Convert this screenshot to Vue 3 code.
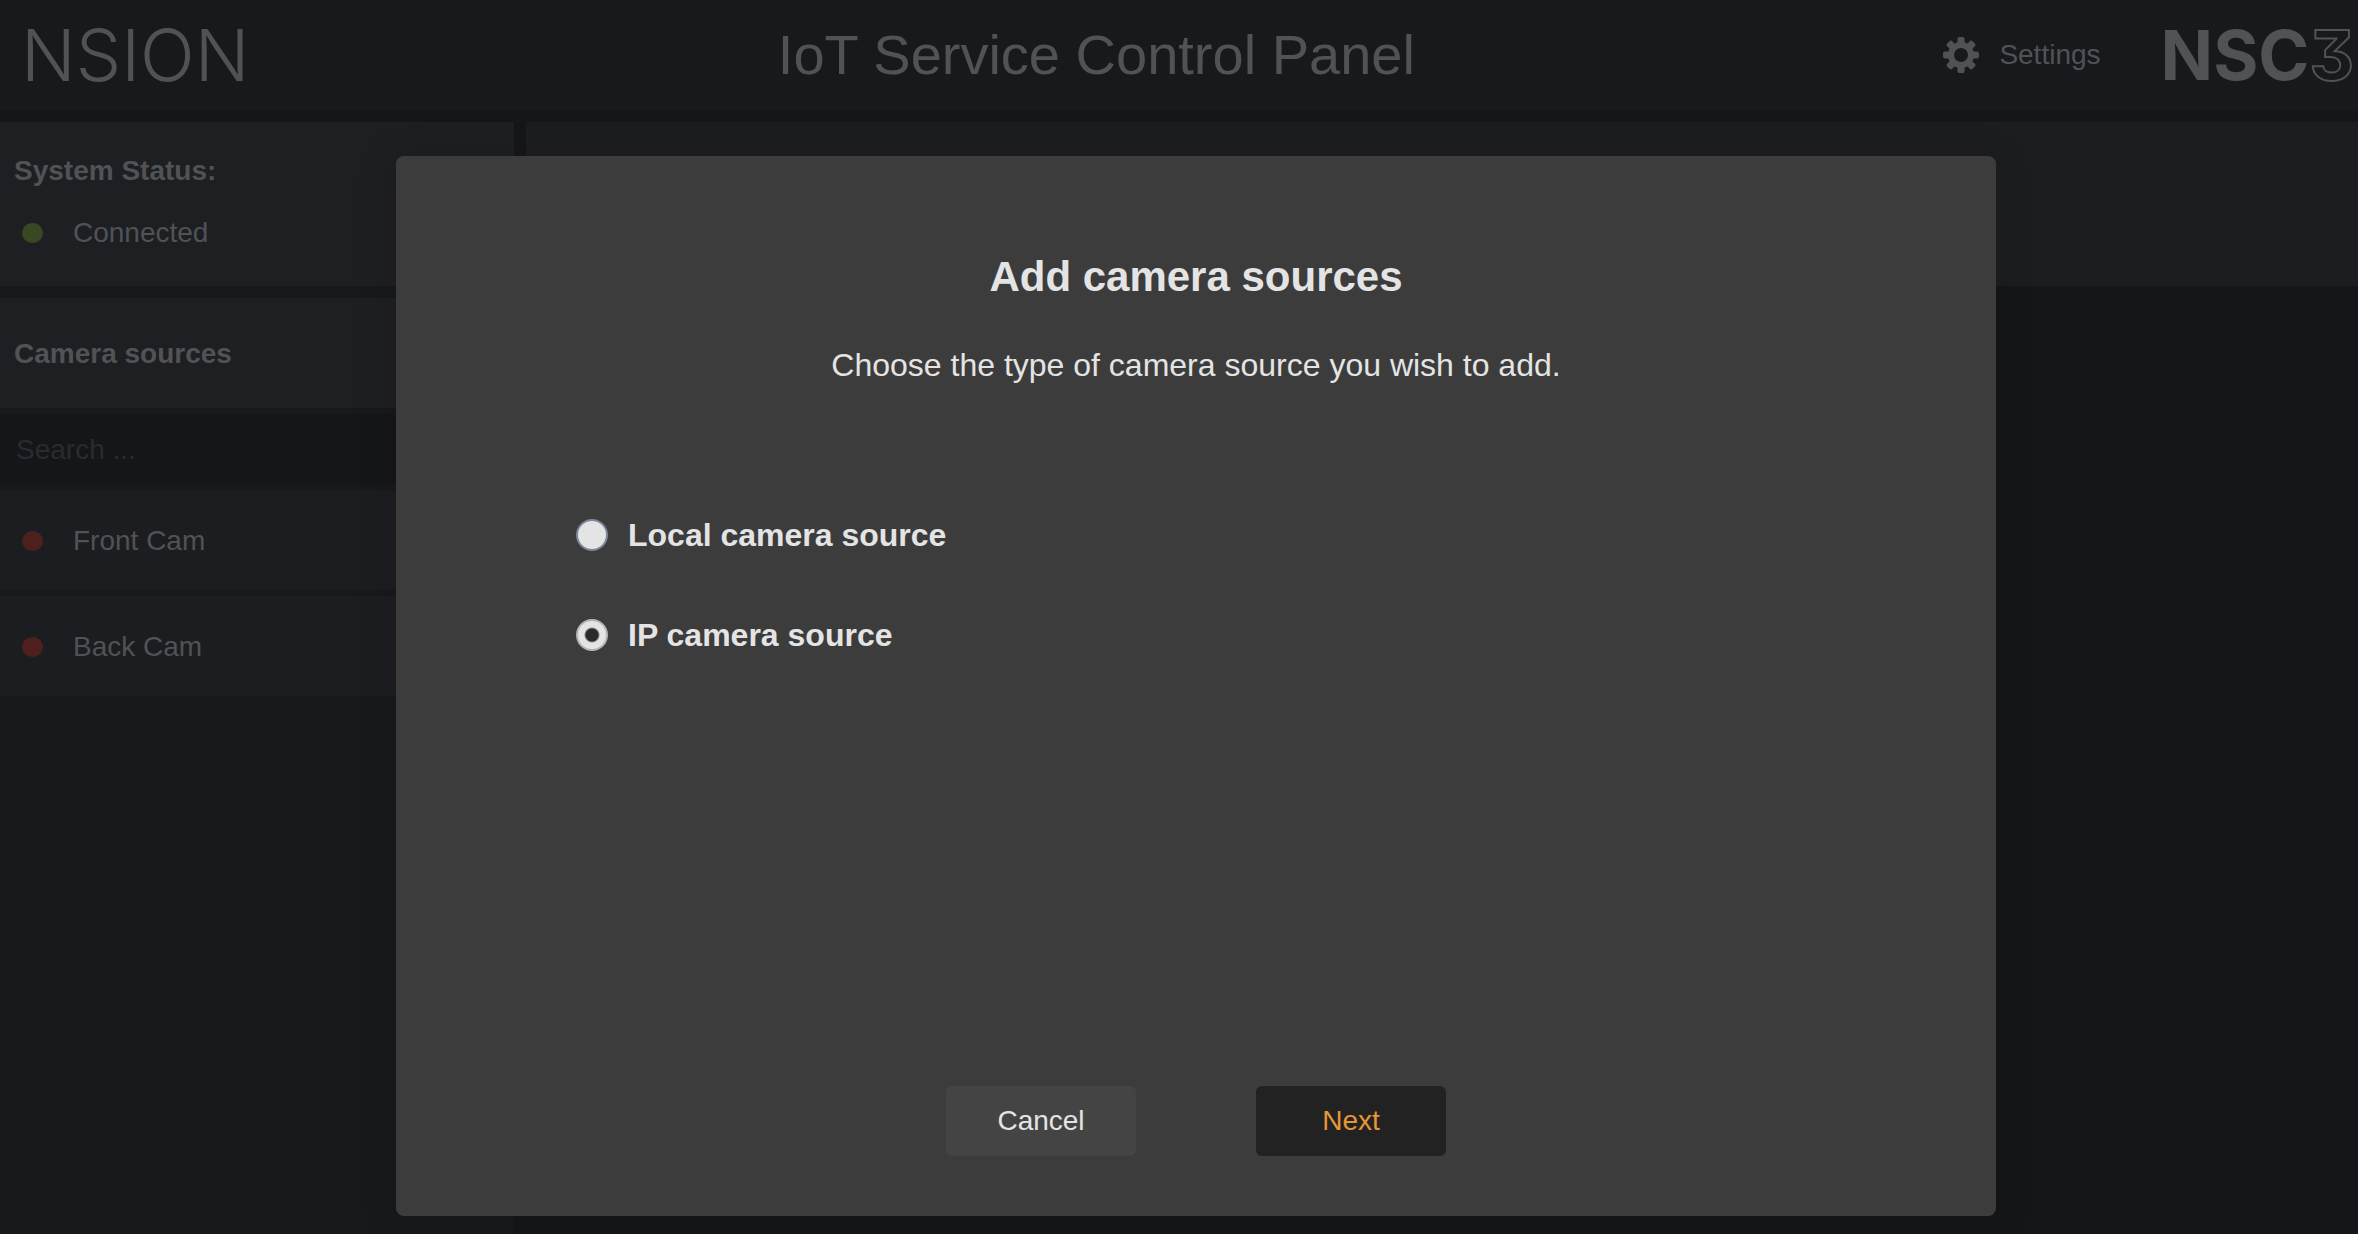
<script setup>
import { ref } from 'vue'

const cameras = ['Front Cam', 'Back Cam']
const sourceTypes = [
  { id: 'local', label: 'Local camera source' },
  { id: 'ip', label: 'IP camera source' },
]
const selected = ref('ip')
const search = ref('')
const teeth = [0, 45, 90, 135, 180, 225, 270, 315]
</script>

<template>
  <div class="app">
    <header class="topbar">
      <div class="brand">NSION</div>
      <h1 class="page-title">IoT Service Control Panel</h1>
      <div class="topbar-right">
        <a class="settings" href="#settings">
          <svg class="gear" viewBox="0 0 36 36" aria-hidden="true">
            <circle cx="18" cy="18" r="10" fill="none" stroke="currentColor" stroke-width="6" />
            <rect
              v-for="angle in teeth"
              :key="angle"
              x="14.4"
              y="0"
              width="7.2"
              height="9"
              rx="2"
              fill="currentColor"
              :transform="`rotate(${angle} 18 18)`"
            />
          </svg>
          <span>Settings</span>
        </a>
        <div class="product">NSC<span class="product-number">3</span></div>
      </div>
    </header>

    <div class="body">
      <aside class="sidebar">
        <section class="status">
          <h2>System Status:</h2>
          <p class="status-line"><span class="dot online"></span>Connected</p>
        </section>
        <section class="sources">
          <h2 class="sources-title">Camera sources</h2>
          <input v-model="search" class="search" type="text" placeholder="Search ..." aria-label="Search cameras" />
          <ul class="camera-list">
            <li v-for="camera in cameras" :key="camera"><span class="dot offline"></span>{{ camera }}</li>
          </ul>
        </section>
      </aside>
      <main class="content"><div class="content-bar"></div></main>
    </div>

    <div class="overlay">
      <form class="dialog" role="dialog" aria-labelledby="dialog-title" @submit.prevent>
        <h2 id="dialog-title" class="dialog-title">Add camera sources</h2>
        <p class="dialog-text">Choose the type of camera source you wish to add.</p>
        <div class="options">
          <label v-for="type in sourceTypes" :key="type.id" class="option" :for="type.id">
            <input :id="type.id" v-model="selected" type="radio" name="source-type" :value="type.id" />
            {{ type.label }}
          </label>
        </div>
        <div class="actions">
          <button type="button" class="cancel">Cancel</button>
          <button type="submit" class="next">Next</button>
        </div>
      </form>
    </div>
  </div>
</template>

<style>
body {
  margin: 0;
  background: #15161a;
}
</style>

<style scoped>
* {
  box-sizing: border-box;
}
h1,
h2,
p,
ul {
  margin: 0;
  padding: 0;
}
.app {
  position: relative;
  display: flex;
  flex-direction: column;
  min-height: 100vh;
  background: #15161a;
  color: #515256;
  font-family: "Liberation Sans", Arial, sans-serif;
  font-size: 28px;
  line-height: 40px;
}
.topbar {
  display: flex;
  align-items: center;
  justify-content: space-between;
  height: 110px;
  padding: 0 4px 0 21px;
  background: #18191d;
}
.brand {
  font-family: Inter, sans-serif;
  font-weight: 300;
  font-size: 72px;
  line-height: 110px;
}
.page-title {
  font-size: 56px;
  font-weight: 400;
  line-height: 110px;
}
.topbar-right {
  display: flex;
  align-items: center;
  gap: 60px;
}
.settings {
  display: flex;
  align-items: center;
  gap: 20px;
  color: inherit;
  text-decoration: none;
}
.gear {
  width: 36px;
  height: 36px;
}
.product {
  font-family: Inter, sans-serif;
  font-weight: 700;
  font-size: 69px;
  line-height: 110px;
}
.product-number {
  color: transparent;
  font-feature-settings: "cv09";
  -webkit-text-stroke: 2px #515256;
}
.body {
  display: flex;
  flex: 1;
  gap: 12px;
  padding-top: 12px;
}
.sidebar {
  display: flex;
  flex-direction: column;
  gap: 12px;
  width: 514px;
  background: #18191d;
}
.sidebar h2 {
  font-size: 28px;
}
.status {
  display: flex;
  flex-direction: column;
  gap: 22px;
  padding: 29px 14px 33px;
  background: #1e1f23;
}
.status-line,
.camera-list li {
  display: flex;
  align-items: center;
  gap: 30px;
}
.status-line {
  padding-left: 8px;
}
.dot {
  width: 21px;
  height: 20px;
  border-radius: 10px;
}
.online {
  background: #3a4722;
}
.offline {
  background: #4e201d;
}
.sources-title {
  padding: 36px 14px 34px;
  background: #1e1f23;
}
.search {
  display: block;
  width: 100%;
  height: 70px;
  margin: 6px 0;
  padding: 2px 16px 0;
  border: 0;
  background: #151619;
  color: #515256;
  font: inherit;
}
.search::placeholder {
  color: #2a2b2e;
  opacity: 1;
}
.camera-list {
  display: flex;
  flex-direction: column;
  gap: 6px;
  list-style: none;
}
.camera-list li {
  height: 100px;
  padding: 2px 22px 0;
  background: #1c1d20;
}
.content {
  flex: 1;
}
.content-bar {
  height: 164px;
  background: #1c1d20;
}
.overlay {
  position: absolute;
  inset: 0;
  display: flex;
  padding: 156px 362px 18px 396px;
}
.dialog {
  display: flex;
  flex: 1;
  flex-direction: column;
  padding: 97px 180px 60px;
  border-radius: 8px;
  background: #3c3c3c;
  box-shadow: 0 4px 40px rgba(0, 0, 0, 0.15);
  color: #e4e4e4;
}
.dialog-title {
  font-size: 42px;
  line-height: 48px;
  text-align: center;
}
.dialog-text {
  margin-top: 44px;
  font-size: 32px;
  text-align: center;
}
.options {
  display: flex;
  flex-direction: column;
  align-items: flex-start;
  gap: 60px;
  margin-top: 130px;
}
.option {
  display: flex;
  align-items: center;
  gap: 20px;
  font-size: 32px;
  font-weight: 700;
}
.option input {
  appearance: none;
  width: 32px;
  height: 32px;
  margin: 0;
  border: 2px solid #7c8798;
  border-radius: 50%;
  background: #e4e4e4;
}
.option input:checked {
  border-color: #b4b4b4;
  background: radial-gradient(circle, #2b2b2b 6px, #e4e4e4 8px);
}
.actions {
  display: flex;
  justify-content: center;
  gap: 120px;
  margin-top: auto;
}
.actions button {
  width: 190px;
  height: 70px;
  border: 0;
  border-radius: 6px;
  font: inherit;
}
.cancel {
  background: #444444;
  color: #e4e4e4;
}
.next {
  background: #222222;
  color: #e79636;
}
</style>
